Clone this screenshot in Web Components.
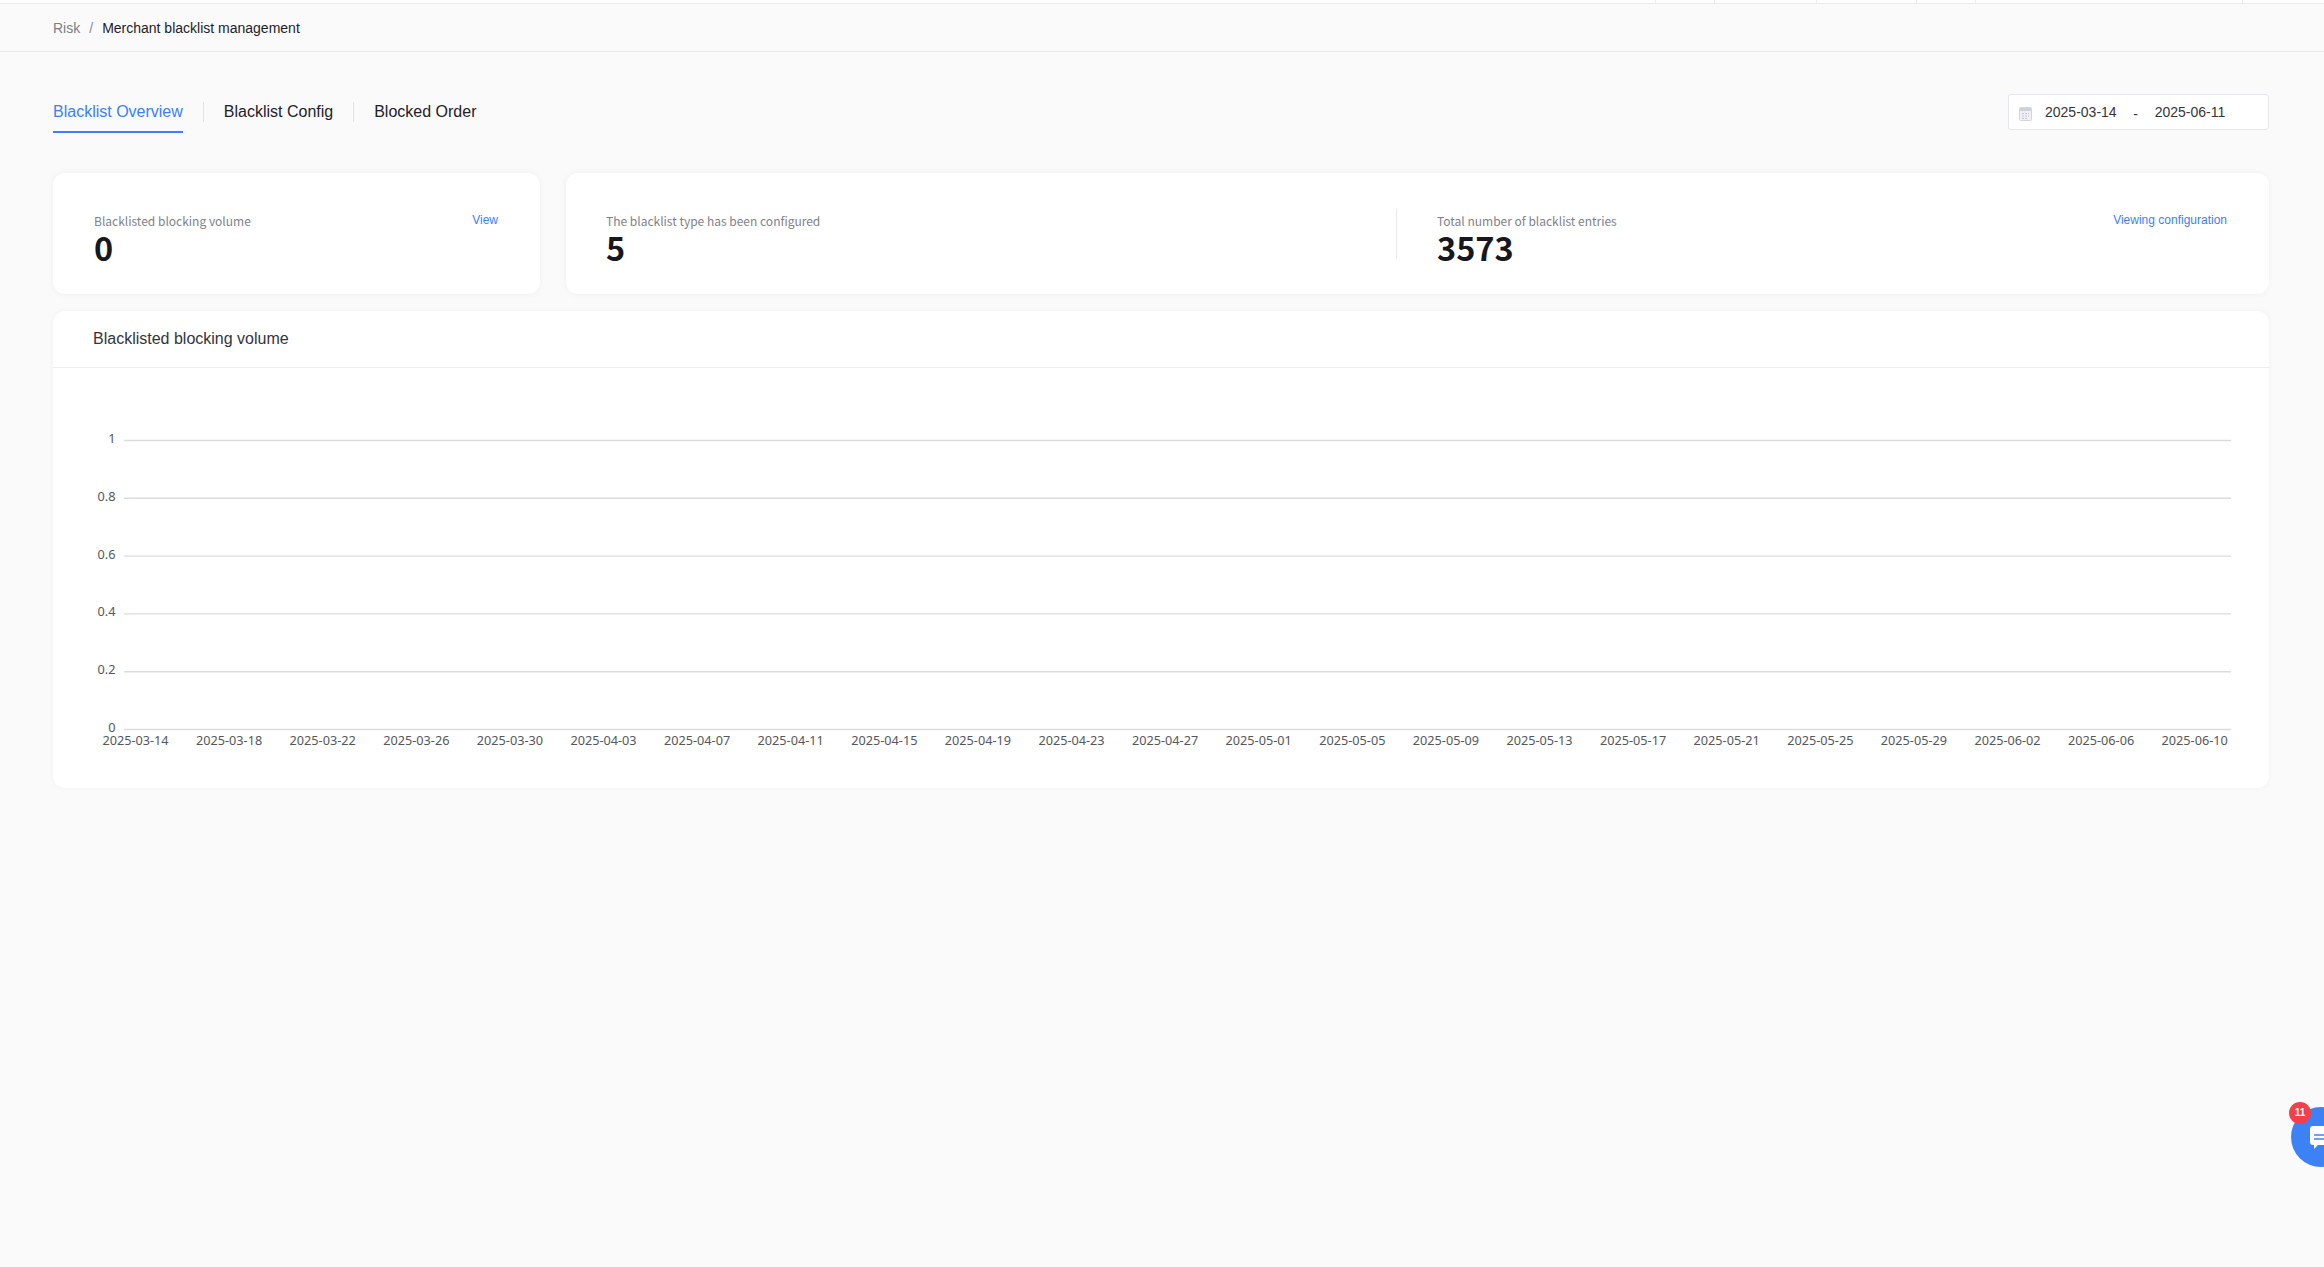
<!DOCTYPE html>
<html lang="en">
<head>
<meta charset="utf-8">
<title>Merchant blacklist management</title>
<style>
  html, body { margin: 0; height: 100%; overflow: hidden; }
  body { background: #fafafa; font-family: "Liberation Sans", Arial, sans-serif; }
</style>
</head>
<body>
<risk-page>
  <top-strip slot="strip"></top-strip>
  <bread-crumbs slot="crumbs" parent="Risk" current="Merchant blacklist management"></bread-crumbs>
  <tab-bar slot="tabs"></tab-bar>
  <date-range slot="range" from="2025-03-14" to="2025-06-11"></date-range>
  <stat-card slot="left-card" style="width:487px">
    <stat-item label="Blacklisted blocking volume" value="0"></stat-item>
    <a slot="action">View</a>
  </stat-card>
  <stat-card slot="right-card" style="flex:1;padding-left:40px">
    <stat-item label="The blacklist type has been configured" value="5" style="width:790px"></stat-item>
    <stat-item label="Total number of blacklist entries" value="3573" divided></stat-item>
    <a slot="action">Viewing configuration</a>
  </stat-card>
  <chart-card slot="chart" heading="Blacklisted blocking volume"></chart-card>
</risk-page>
<chat-bubble count="11"></chat-bubble>

<script>
class RiskPage extends HTMLElement {
  constructor() {
    super();
    this.attachShadow({ mode: "open" });
    this.shadowRoot.innerHTML = `
      <style>
        :host { display: block; }
        .content { padding: 42px 55px 0 53px; }
        .head { display: flex; justify-content: space-between; align-items: flex-start; }
        .cards { display: flex; gap: 26px; margin-top: 40px; }
      </style>
      <slot name="strip"></slot>
      <slot name="crumbs"></slot>
      <div class="content">
        <div class="head">
          <slot name="tabs"></slot>
          <slot name="range"></slot>
        </div>
        <div class="cards">
          <slot name="left-card"></slot>
          <slot name="right-card"></slot>
        </div>
        <slot name="chart"></slot>
      </div>
    `;
  }
}

class TopStrip extends HTMLElement {
  constructor() {
    super();
    this.attachShadow({ mode: "open" });
    // the header is scrolled off, only the feet of its cell borders are left
    const cuts = [1656, 1715, 1817, 1917, 1976, 2243];
    let prev = 0;
    const cells = cuts.map(x => {
      const w = x - prev;
      prev = x;
      return `<i style="width:${w}px"></i>`;
    }).join("");
    this.shadowRoot.innerHTML = `
      <style>
        :host { display: flex; height: 3px; background: #fff; border-bottom: 1px solid #ececee; }
        i { display: block; box-sizing: border-box; border-right: 1px solid #ececee; }
      </style>
      ${cells}
    `;
  }
}

class BreadCrumbs extends HTMLElement {
  constructor() {
    super();
    this.attachShadow({ mode: "open" });
    this.shadowRoot.innerHTML = `
      <style>
        :host {
          display: flex;
          align-items: center;
          height: 47px;
          box-sizing: content-box;
          padding: 0 53px;
          font-size: 14px;
          color: #1f2129;
          border-bottom: 1px solid #e8e8ea;
        }
        .parent { color: #7c7f87; }
        .sep { color: #8a8c93; margin: 0 9px; }
      </style>
      <span class="parent"></span><span class="sep">/</span><span class="current"></span>
    `;
  }

  connectedCallback() {
    this.shadowRoot.querySelector(".parent").textContent = this.getAttribute("parent");
    this.shadowRoot.querySelector(".current").textContent = this.getAttribute("current");
  }
}

class TabBar extends HTMLElement {
  constructor() {
    super();
    this.attachShadow({ mode: "open" });
    this.shadowRoot.innerHTML = `
      <style>
        :host { display: flex; align-items: flex-start; font-size: 16px; color: #1f2129; margin-top: 6px; }
        .tab { height: 31px; line-height: 23px; cursor: pointer; }
        .tab.on { color: #3d7eff; border-bottom: 2px solid #3d7eff; }
        .bar { width: 1px; height: 20px; margin: 2px 20px 0; background: #e2e3e6; }
      </style>
      <div class="tab on">Blacklist Overview</div>
      <div class="bar"></div>
      <div class="tab">Blacklist Config</div>
      <div class="bar"></div>
      <div class="tab">Blocked Order</div>
    `;
  }
}

class DateRange extends HTMLElement {
  constructor() {
    super();
    this.attachShadow({ mode: "open" });
    this.shadowRoot.innerHTML = `
      <style>
        :host {
          display: flex;
          align-items: center;
          box-sizing: border-box;
          width: 261px;
          height: 36px;
          padding-left: 10px;
          background: #fff;
          border: 1px solid #e6e6ee;
          border-radius: 3px;
          font-size: 14px;
          color: #33353c;
        }
        svg { flex: none; display: block; margin: 4px 13px 0 0; }
        .dash { width: 38px; text-align: center; padding-top: 4px; }
      </style>
      <svg width="13" height="14" viewBox="0 0 13 14">
        <rect x="0.5" y="0.5" width="12" height="13" rx="1" fill="#eef0f4" stroke="#d5d6de"/>
        <rect x="1" y="1" width="11" height="3" fill="#cfd1da"/>
        <path d="M3 6.5h2M6 6.5h2M9 6.5h1M3 9h2M6 9h2M9 9h1M3 11.5h2M6 11.5h2" stroke="#c3c5d0" fill="none"/>
      </svg>
      <span class="from"></span><span class="dash">-</span><span class="to"></span>
    `;
  }

  connectedCallback() {
    this.shadowRoot.querySelector(".from").textContent = this.getAttribute("from");
    this.shadowRoot.querySelector(".to").textContent = this.getAttribute("to");
  }
}

class StatCard extends HTMLElement {
  constructor() {
    super();
    this.attachShadow({ mode: "open" });
    this.shadowRoot.innerHTML = `
      <style>
        :host {
          display: flex;
          box-sizing: border-box;
          height: 121px;
          padding: 40px 42px 0 41px;
          background: #fff;
          border-radius: 12px;
          box-shadow: 0 0 6px rgba(0, 0, 0, 0.05);
        }
        .items { flex: 1; display: flex; min-width: 0; }
        ::slotted(a) {
          font-size: 12px;
          color: #3d7eff;
          line-height: 14px;
          cursor: pointer;
        }
      </style>
      <div class="items"><slot></slot></div>
      <slot name="action"></slot>
    `;
  }
}

class StatItem extends HTMLElement {
  static get observedAttributes() { return ["label", "value"]; }

  constructor() {
    super();
    this.attachShadow({ mode: "open" });
    this.shadowRoot.innerHTML = `
      <style>
        :host { display: block; box-sizing: border-box; height: 50px; margin-top: -4px; }
        :host([divided]) { padding-left: 40px; border-left: 1px solid #e9e9ec; }
        .label { font: 12px/18px "Noto Sans CJK SC", "Noto Sans", sans-serif; color: #7f828a; margin-top: 3px; }
        .value { font: 700 32.5px/33px "Noto Sans CJK SC", "Noto Sans", sans-serif; color: #17181d; }
      </style>
      <div class="label"></div>
      <div class="value"></div>
    `;
  }

  attributeChangedCallback(name, oldVal, newVal) {
    this.shadowRoot.querySelector("." + name).textContent = newVal;
  }
}

class ChartCard extends HTMLElement {
  constructor() {
    super();
    this.attachShadow({ mode: "open" });
    this.shadowRoot.innerHTML = `
      <style>
        :host {
          display: block;
          margin-top: 17px;
          height: 477px;
          background: #fff;
          border-radius: 12px;
          box-shadow: 0 0 6px rgba(0, 0, 0, 0.04);
        }
        h3 {
          margin: 0;
          height: 56px;
          line-height: 56px;
          padding-left: 40px;
          font-size: 16px;
          font-weight: 400;
          color: #33353c;
          border-bottom: 1px solid #eeeef0;
        }
      </style>
      <h3></h3>
      <line-chart></line-chart>
    `;
  }

  connectedCallback() {
    this.shadowRoot.querySelector("h3").textContent = this.getAttribute("heading");
  }
}

class LineChart extends HTMLElement {
  constructor() {
    super();
    this.attachShadow({ mode: "open" });
    const dates = [
      "2025-03-14", "2025-03-18", "2025-03-22", "2025-03-26", "2025-03-30", "2025-04-03",
      "2025-04-07", "2025-04-11", "2025-04-15", "2025-04-19", "2025-04-23", "2025-04-27",
      "2025-05-01", "2025-05-05", "2025-05-09", "2025-05-13", "2025-05-17", "2025-05-21",
      "2025-05-25", "2025-05-29", "2025-06-02", "2025-06-06", "2025-06-10"
    ];
    const ticks = ["1", "0.8", "0.6", "0.4", "0.2", "0"];
    // svg origin is the card's left edge, 368 from the top of the page
    let svg = "";
    ticks.forEach((t, i) => {
      const y = 72.5 + i * 57.8;
      svg += `<line x1="71" x2="2178" y1="${y}" y2="${y}" stroke="#dcdcdc" stroke-width="1.4"/>`;
      svg += `<text x="62.5" y="${y + 2.5}" text-anchor="end">${t}</text>`;
    });
    dates.forEach((d, i) => {
      svg += `<text x="${82.5 + i * 93.6}" y="377" text-anchor="middle">${d}</text>`;
    });
    this.shadowRoot.innerHTML = `
      <style>
        :host { display: block; }
        svg { display: block; }
        text { font: 12.7px "Noto Sans", sans-serif; fill: #55575c; }
      </style>
      <svg width="2216" height="420">${svg}</svg>
    `;
  }
}

class ChatBubble extends HTMLElement {
  constructor() {
    super();
    this.attachShadow({ mode: "open" });
    this.shadowRoot.innerHTML = `
      <style>
        :host {
          position: fixed;
          left: 2291px;
          top: 1107px;
          width: 60px;
          height: 60px;
          border-radius: 50%;
          background: #3d82f5;
          font-family: "Liberation Sans", sans-serif;
        }
        .badge {
          position: absolute;
          left: -2px;
          top: -5px;
          width: 22px;
          height: 22px;
          line-height: 22px;
          text-align: center;
          border-radius: 50%;
          background: #f0414a;
          color: #fff;
          font-size: 10px;
          font-weight: 700;
        }
        svg { position: absolute; left: 18px; top: 18px; }
      </style>
      <svg width="28" height="25" viewBox="0 0 28 25">
        <path d="M4 1h20a3 3 0 0 1 3 3v13a3 3 0 0 1-3 3H9l-4 4v-4H4a3 3 0 0 1-3-3V4a3 3 0 0 1 3-3z" fill="#fff"/>
        <path d="M5 10h15M5 14h11" stroke="#3d82f5" stroke-width="1.6" fill="none"/>
      </svg>
      <div class="badge"></div>
    `;
  }

  connectedCallback() {
    this.shadowRoot.querySelector(".badge").textContent = this.getAttribute("count");
  }
}

customElements.define("risk-page", RiskPage);
customElements.define("top-strip", TopStrip);
customElements.define("bread-crumbs", BreadCrumbs);
customElements.define("tab-bar", TabBar);
customElements.define("date-range", DateRange);
customElements.define("stat-card", StatCard);
customElements.define("stat-item", StatItem);
customElements.define("chart-card", ChartCard);
customElements.define("line-chart", LineChart);
customElements.define("chat-bubble", ChatBubble);
</script>
</body>
</html>
